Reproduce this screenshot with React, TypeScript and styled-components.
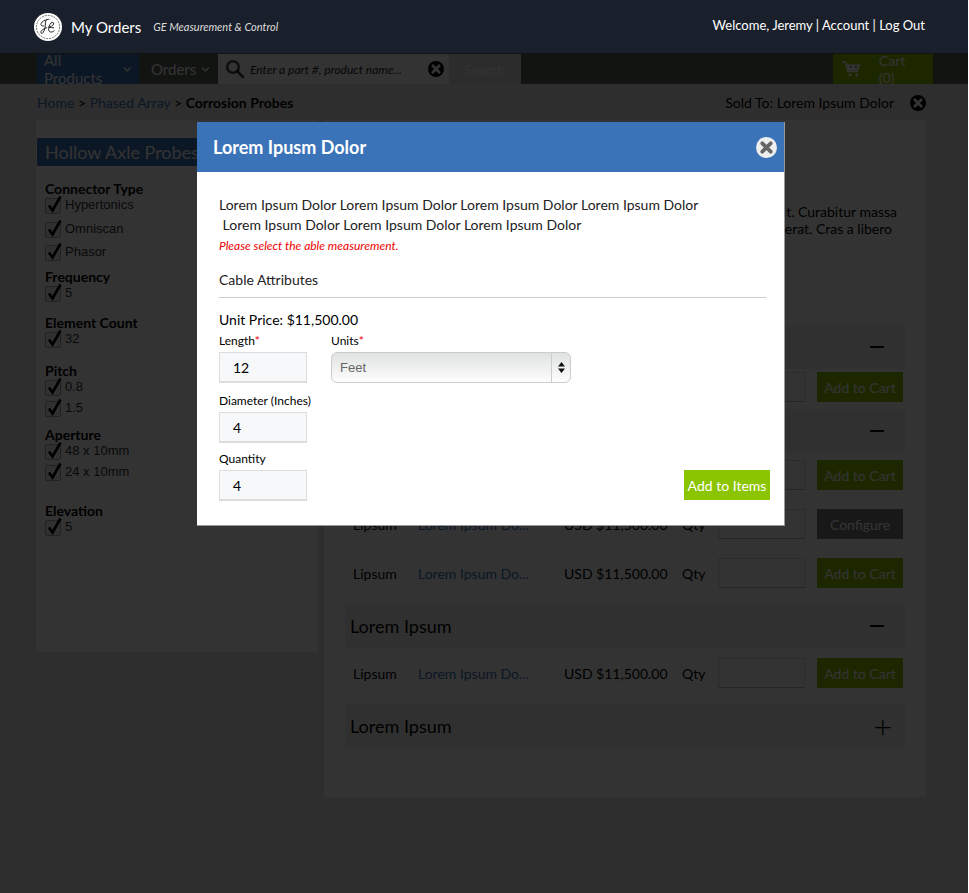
import React from "react";
import styled, { createGlobalStyle } from "styled-components";
import { FaChevronDown } from "react-icons/fa";

const UI_FONT = `Lato, "Open Sans", "Liberation Sans", sans-serif`;

const GlobalStyle = createGlobalStyle`
	html, body {
		margin: 0;
		padding: 0;
		background: #fff;
	}
	body {
		font-family: ${UI_FONT};
		font-size: 14px;
		color: #000;
	}
	* {
		box-sizing: border-box;
	}
`;

const Page = styled.div`
	position: relative;
	width: 968px;
	height: 893px;
	overflow: hidden;
	background: #e6e6e6;
`;

const Header = styled.header`
	position: relative;
	z-index: 30;
	height: 53px;
	display: flex;
	align-items: center;
	justify-content: space-between;
	padding: 0 43px 0 34px;
	background: #1a202b;
	color: #fff;
`;

const Brand = styled.div`
	display: flex;
	align-items: center;
`;

const AppName = styled.span`
	font-size: 15px;
	margin-left: 9px;
`;

const Division = styled.span`
	font-size: 11px;
	font-style: italic;
	color: #ddd;
	margin-left: 12px;
`;

const UserLinks = styled.div`
	font-size: 13px;
	margin-top: -3px;
`;

const NavBar = styled.nav`
	height: 31px;
	display: flex;
	align-items: stretch;
	padding: 1px 35px 0 37px;
	background: #5a645a;
`;

const NavItem = styled.div<{ $active?: boolean }>`
	display: flex;
	align-items: center;
	gap: 5px;
	padding: 0 8px 0 ${(p) => (p.$active ? 7 : 12)}px;
	width: ${(p) => (p.$active ? 102 : 79)}px;
	font-size: 15px;
	color: #fff;
	background: ${(p) => (p.$active ? "#3b73b9" : "transparent")};
`;

const SearchBox = styled.div`
	width: 231px;
	display: flex;
	align-items: center;
	padding: 0 5px 0 7px;
	background: #fff;
`;

const SearchInput = styled.span`
	flex: 1;
	margin-left: 5px;
	font-size: 12px;
	font-style: italic;
	color: #222;
`;

const SearchButton = styled.div`
	width: 72px;
	display: flex;
	align-items: center;
	justify-content: center;
	font-size: 14px;
	color: #fff;
	background: #dcdcdc;
`;

const CartButton = styled.div`
	width: 100px;
	margin-left: auto;
	display: flex;
	align-items: center;
	padding: 0 9px;
	gap: 18px;
	font-size: 14px;
	color: #fff;
	background: #8bc400;
`;

const TopRow = styled.div`
	height: 36px;
	display: flex;
	align-items: center;
	justify-content: space-between;
	padding: 1px 42px 0 37px;
`;

const Crumbs = styled.div`
	font-size: 14px;
	a {
		color: #3b73b9;
	}
	b {
		font-weight: 700;
	}
`;

const SoldTo = styled.div`
	display: flex;
	align-items: center;
	gap: 16px;
	color: #000;
`;

const Columns = styled.div`
	display: flex;
	align-items: flex-start;
	gap: 6px;
	padding-left: 36px;
`;

const Sidebar = styled.aside`
	width: 282px;
	height: 532px;
	padding: 18px 0 0 1px;
	background: #fff;
`;

const SidebarTitle = styled.div`
	height: 28px;
	padding-left: 8px;
	font-size: 18px;
	line-height: 28px;
	color: #fff;
	background: #3b73b9;
	margin-bottom: 14px;
`;

const FilterGroup = styled.div<{ $top: number }>`
	margin: ${(p) => p.$top}px 0 0 8px;
`;

const FilterTitle = styled.div`
	font-size: 14px;
	font-weight: 700;
	line-height: 17px;
`;

const FilterItem = styled.label<{ $pitch: number }>`
	display: flex;
	align-items: flex-start;
	height: ${(p) => p.$pitch}px;
	font-family: "Liberation Sans", Arial, sans-serif;
	font-size: 13px;
	line-height: 15px;
	color: #333;
`;

const CheckBox = styled.span`
	position: relative;
	width: 16px;
	height: 16px;
	margin: 1px 4px 0 0;
	border: 1px solid #aaa;
	border-radius: 2px;
	background: #eee;
	flex: none;
	svg {
		position: absolute;
		left: 0;
		top: -4px;
	}
`;

const Main = styled.main`
	width: 602px;
	height: 677px;
	padding: 83px 0 0 21px;
	background: #fff;
`;

const Lines = styled.div`
	height: 122px;
	line-height: 17px;
	font-size: 14px;
`;

const Line = styled.div<{ $inset: number }>`
	white-space: nowrap;
	text-align: right;
	padding-right: ${(p) => p.$inset}px;
`;

const SectionBar = styled.div<{ $top: number; $bottom: number }>`
	height: 44px;
	width: 560px;
	margin: ${(p) => p.$top}px 0 ${(p) => p.$bottom}px;
	padding: 0 21px 0 5px;
	display: flex;
	align-items: center;
	justify-content: space-between;
	font-size: 18px;
	background: #f0f0f0;
`;

const Toggle = styled.span`
	width: 14px;
	height: 2px;
	background: #000;
	margin-right: 0;
`;

const Plus = styled.span`
	font-size: 32px;
	font-weight: 300;
	line-height: 32px;
	margin-right: -8px;
`;

const ProductRow = styled.div`
	display: grid;
	grid-template-columns: 65px 146px 118px 36px 87px 86px;
	column-gap: 0;
	align-items: center;
	height: 30px;
	padding-left: 8px;
	width: 558px;
	font-size: 14px;
	& + & {
		margin-top: 19px;
	}
	a {
		color: #3b73b9;
	}
`;

const QtyInput = styled.div`
	height: 30px;
	background: #fff;
	border: 1px solid #ddd;
	border-bottom-color: #bbb;
`;

const RowButton = styled.div<{ $dark?: boolean }>`
	height: 30px;
	margin-left: 12px;
	width: 86px;
	display: flex;
	align-items: center;
	justify-content: center;
	color: #fff;
	background: ${(p) => (p.$dark ? "#777" : "#8bc400")};
`;

const Overlay = styled.div`
	position: absolute;
	z-index: 10;
	inset: 53px 0 0 0;
	background: rgba(0, 0, 0, 0.8);
`;

const Modal = styled.section`
	position: absolute;
	z-index: 20;
	left: 197px;
	top: 122px;
	width: 588px;
	height: 404px;
	background: #fff;
	border-right: 1px solid #999;
	border-bottom: 1px solid #999;
`;

const ModalHeader = styled.div`
	height: 50px;
	display: flex;
	align-items: center;
	justify-content: space-between;
	padding: 0 7px 0 16px;
	font-size: 18px;
	font-weight: 700;
	color: #fff;
	background: #3b73b9;
`;

const ModalBody = styled.div`
	padding: 23px 14px 0 22px;
	font-size: 14px;
	color: #222;
`;

const Intro = styled.div`
	line-height: 20px;
`;

const ErrorText = styled.div`
	margin-top: 3px;
	font-size: 12px;
	font-style: italic;
	line-height: 16px;
	color: #ee0000;
`;

const SectionHead = styled.div`
	margin-top: 17px;
	padding-bottom: 8px;
	line-height: 18px;
	border-bottom: 1px solid #ccc;
	width: 547px;
`;

const UnitPrice = styled.div`
	margin-top: 13px;
	line-height: 18px;
	color: #000;
`;

const FieldRow = styled.div<{ $top: number }>`
	display: flex;
	align-items: flex-end;
	justify-content: space-between;
	margin-top: ${(p) => p.$top}px;
`;

const FieldGroup = styled.div`
	display: flex;
	align-items: flex-start;
	gap: 24px;
`;

const Field = styled.div`
	width: 88px;
`;

const FieldLabel = styled.div`
	font-size: 12px;
	line-height: 16px;
	margin-bottom: 3px;
	color: #000;
	white-space: nowrap;
	i {
		font-style: normal;
		color: #e00;
	}
`;

const TextBox = styled.div`
	height: 31px;
	padding-left: 13px;
	font-size: 14px;
	line-height: 30px;
	color: #000;
	background: #f7f8fa;
	border: 1px solid #ddd;
	border-bottom: 2px solid #ddd;
`;

const SelectBox = styled.div`
	width: 240px;
	height: 31px;
	margin-top: 2px;
	display: flex;
	align-items: center;
	justify-content: space-between;
	padding-left: 8px;
	font-family: "Liberation Sans", Arial, sans-serif;
	font-size: 13px;
	color: #666;
	border: 1px solid #ccc;
	border-radius: 6px;
	background: linear-gradient(#e0e2e2, #fdfdfd);
`;

const SelectArrows = styled.span`
	width: 19px;
	height: 100%;
	display: flex;
	align-items: center;
	justify-content: center;
	border-left: 1px solid #ccc;
`;

const AddButton = styled.div`
	width: 86px;
	height: 30px;
	margin-bottom: 1px;
	display: flex;
	align-items: center;
	justify-content: center;
	font-size: 14px;
	color: #fff;
	background: #8bc400;
`;

const XCircle = ({ size, bg, fg }: { size: number; bg: string; fg: string }) => (
	<svg width={size} height={size} viewBox="0 0 20 20">
		<circle cx="10" cy="10" r="10" fill={bg} />
		<path d="M6 6l8 8M14 6l-8 8" stroke={fg} strokeWidth="3.6" strokeLinecap="round" />
	</svg>
);

const GeLogo = () => (
	<svg width="28" height="28" viewBox="0 0 28 28">
		<circle cx="14" cy="14" r="14" fill="#fff" />
		<circle cx="14" cy="14" r="11.6" fill="none" stroke="#333" strokeWidth="0.7" strokeDasharray="2 1" />
		<path
			d="M15 6.5c-2-1-3.6 1-3.6 3.4 0 2.8-.6 7-2.2 9.6-.9 1.4-2.4 1.2-2.3-.3.1-2 3-3.6 6-4.6M9.5 13c-2 .2-3-.9-2.4-2.4.8-2.1 3.6-3.6 6-3.9M15 14c1.6 0 4-1.2 4.6-3 .5-1.6-1.3-2.4-2.6-1-1.7 1.8-2.9 5-2.2 7.5.6 2 3.4 2.1 5.4.3M15.5 14.6c1.3-.2 3-.1 4.200 .2"
			fill="none"
			stroke="#222"
			strokeWidth="1"
			strokeLinecap="round"
		/>
	</svg>
);

const SearchIcon = () => (
	<svg width="20" height="20" viewBox="0 0 20 20">
		<circle cx="8" cy="8" r="5.8" fill="none" stroke="#000" strokeOpacity="0.75" strokeWidth="2.4" />
		<path d="M12.5 12.500l5.500 5.500" stroke="#000" strokeOpacity="0.75" strokeWidth="2.8" strokeLinecap="round" />
	</svg>
);

const CartIcon = () => (
	<svg width="19" height="16" viewBox="0 0 19 16">
		<path d="M0 1h3.400l2.600 9.500h10" fill="none" stroke="#fff" strokeWidth="1.400" />
		<path d="M4.500 3.500H18.500l-2 6H6z" fill="#fff" />
		<circle cx="8" cy="14" r="1.500" fill="#fff" />
		<circle cx="15" cy="14" r="1.500" fill="#fff" />
		<circle cx="9" cy="6" r="1" fill="#5a645a" />
		<circle cx="14" cy="6" r="1" fill="#5a645a" />
	</svg>
);

const CheckMark = () => (
	<svg width="18" height="20" viewBox="0 0 18 20">
		<path d="M3 10.500l3.500 5L14.500 1.500" fill="none" stroke="#000" strokeWidth="2.600" />
	</svg>
);

const ArrowsIcon = () => (
	<svg width="7" height="11" viewBox="0 0 7 11">
		<path d="M3.500 0L7 4.500H0zM3.500 11L0 6.500h7z" fill="#111" />
	</svg>
);

const filters = [
	{ title: "Connector Type", top: 0, pitch: 23.5, items: ["Hypertonics", "Omniscan", "Phasor"] },
	{ title: "Frequency", top: 0, pitch: 29, items: ["5"] },
	{ title: "Element Count", top: 0, pitch: 31, items: ["32"] },
	{ title: "Pitch", top: 0, pitch: 21, items: ["0.8", "1.5"] },
	{ title: "Aperture", top: 5, pitch: 21, items: ["48 x 10mm", "24 x 10mm"] },
	{ title: "Elevation", top: 17, pitch: 21, items: ["5"] },
];

const Row = ({ dark }: { dark?: boolean }) => (
	<ProductRow>
		<span>Lipsum</span>
		<a>Lorem Ipsum Do...</a>
		<span>USD $11,500.00</span>
		<span>Qty</span>
		<QtyInput />
		<RowButton $dark={dark}>{dark ? "Configure" : "Add to Cart"}</RowButton>
	</ProductRow>
);

export default function App() {
	return (
		<Page>
			<GlobalStyle />
			<Header>
				<Brand>
					<GeLogo />
					<AppName>My Orders</AppName>
					<Division>GE Measurement &amp; Control</Division>
				</Brand>
				<UserLinks>Welcome, Jeremy | Account | Log Out</UserLinks>
			</Header>
			<NavBar>
				<NavItem $active>
					All Products <FaChevronDown size={9} />
				</NavItem>
				<NavItem>
					Orders <FaChevronDown size={9} />
				</NavItem>
				<SearchBox>
					<SearchIcon />
					<SearchInput>Enter a part #, product name...</SearchInput>
					<XCircle size={16} bg="#000" fg="#fff" />
				</SearchBox>
				<SearchButton>Search</SearchButton>
				<CartButton>
					<CartIcon />
					Cart (0)
				</CartButton>
			</NavBar>
			<TopRow>
				<Crumbs>
					<a>Home</a> &gt; <a>Phased Array</a> &gt; <b>Corrosion Probes</b>
				</Crumbs>
				<SoldTo>
					Sold To: Lorem Ipsum Dolor
					<XCircle size={16} bg="#000" fg="#fff" />
				</SoldTo>
			</TopRow>
			<Columns>
				<Sidebar>
					<SidebarTitle>Hollow Axle Probes</SidebarTitle>
					{filters.map((group) => (
						<FilterGroup key={group.title} $top={group.top}>
							<FilterTitle>{group.title}</FilterTitle>
							{group.items.map((item) => (
								<FilterItem key={item} $pitch={group.pitch}>
									<CheckBox>
										<CheckMark />
									</CheckBox>
									{item}
								</FilterItem>
							))}
						</FilterGroup>
					))}
				</Sidebar>
				<Main>
					<Lines>
						<Line $inset={29}>Sed ut perspiciatis amet elit. Curabitur massa</Line>
						<Line $inset={34}>Praesent vitae dapibus erat. Cras a libero</Line>
					</Lines>
					<SectionBar $top={0} $bottom={3}>
						Lorem Ipsum <Toggle />
					</SectionBar>
					<Row />
					<SectionBar $top={7} $bottom={7}>
						Lorem Ipsum <Toggle />
					</SectionBar>
					<Row />
					<Row dark />
					<Row />
					<SectionBar $top={16} $bottom={10}>
						Lorem Ipsum <Toggle />
					</SectionBar>
					<Row />
					<SectionBar $top={16} $bottom={0}>
						Lorem Ipsum <Plus>+</Plus>
					</SectionBar>
				</Main>
			</Columns>
			<Overlay />
			<Modal>
				<ModalHeader>
					Lorem Ipusm Dolor
					<XCircle size={21} bg="#eee" fg="#666" />
				</ModalHeader>
				<ModalBody>
					<Intro>
						Lorem Ipsum Dolor Lorem Ipsum Dolor Lorem Ipsum Dolor Lorem Ipsum Dolor
						<br />
						&nbsp;Lorem Ipsum Dolor Lorem Ipsum Dolor Lorem Ipsum Dolor
					</Intro>
					<ErrorText>Please select the able measurement.</ErrorText>
					<SectionHead>Cable Attributes</SectionHead>
					<UnitPrice>Unit Price: $11,500.00</UnitPrice>
					<FieldRow $top={4}>
						<FieldGroup>
							<Field>
								<FieldLabel>
									Length<i>*</i>
								</FieldLabel>
								<TextBox>12</TextBox>
							</Field>
							<div>
								<FieldLabel>
									Units<i>*</i>
								</FieldLabel>
								<SelectBox>
									Feet
									<SelectArrows>
										<ArrowsIcon />
									</SelectArrows>
								</SelectBox>
							</div>
						</FieldGroup>
					</FieldRow>
					<FieldRow $top={10}>
						<Field>
							<FieldLabel>Diameter (Inches)</FieldLabel>
							<TextBox>4</TextBox>
						</Field>
					</FieldRow>
					<FieldRow $top={8}>
						<Field>
							<FieldLabel>Quantity</FieldLabel>
							<TextBox>4</TextBox>
						</Field>
						<AddButton>Add to Items</AddButton>
					</FieldRow>
				</ModalBody>
			</Modal>
		</Page>
	);
}
